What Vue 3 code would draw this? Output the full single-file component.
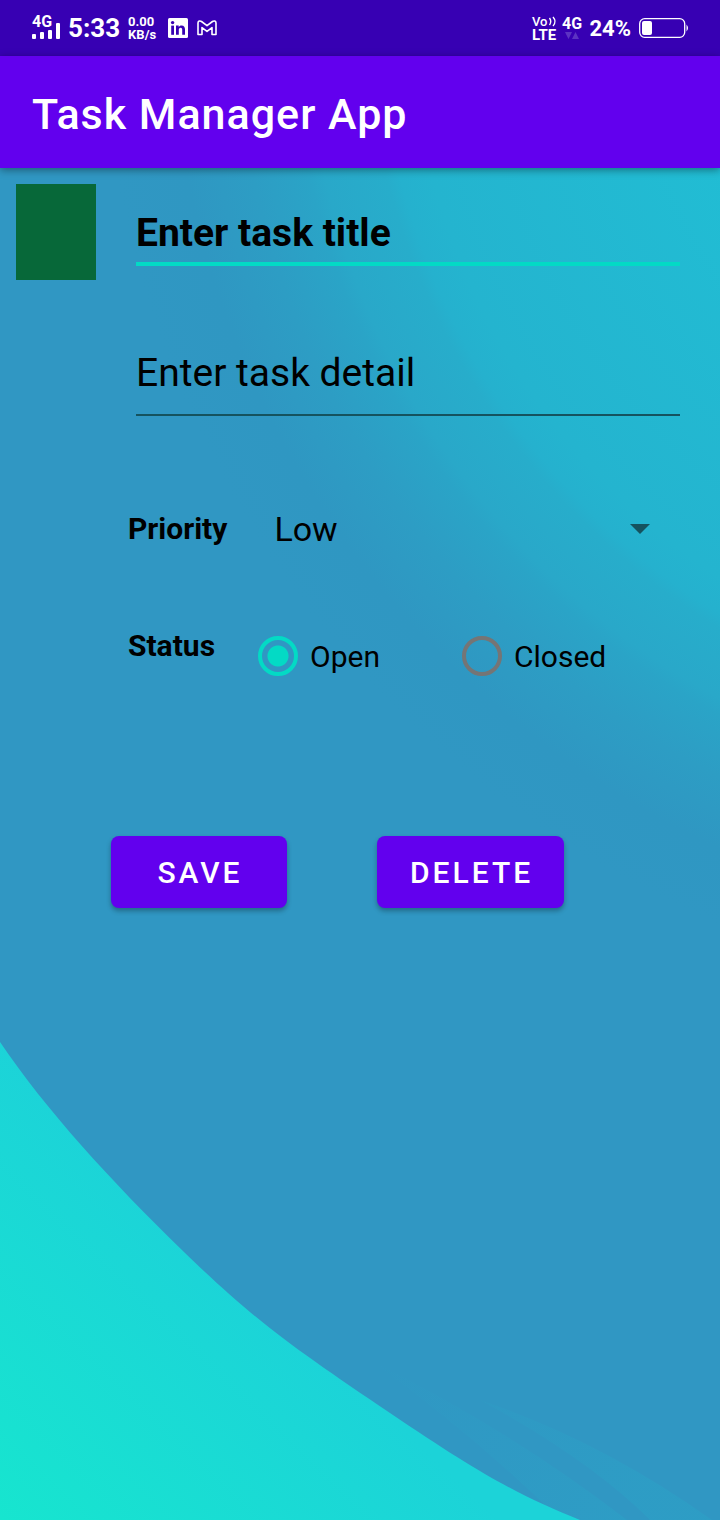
<script setup>
import { ref } from 'vue'

const title = ref('')
const detail = ref('')
const priority = ref('Low')
const status = ref('Open')
const priorities = ['Low', 'Medium', 'High']
const statuses = ['Open', 'Closed']
</script>

<template>
  <div class="screen">
    <div class="status-bar">
      <svg class="signal" width="30" height="40" viewBox="0 -6 30 40" fill="#fff">
        <text x="1" y="13" font-size="16" font-weight="700">4G</text>
        <rect x="1" y="20" width="4" height="5" rx="1" />
        <rect x="9" y="18" width="4" height="7" rx="1" />
        <rect x="17" y="16" width="4" height="9" rx="1" />
        <rect x="25" y="9" width="4" height="16" rx="1" />
      </svg>
      <span class="clock">5:33</span>
      <span class="speed"><b>0.00</b><b>KB/s</b></span>
      <svg class="linkedin" width="20" height="20" viewBox="0 0 20 20">
        <rect width="20" height="20" rx="1.500" fill="#fff" />
        <g fill="#3700b3">
          <circle cx="4.600" cy="4.600" r="1.700" />
          <rect x="3.200" y="7.600" width="2.800" height="9.200" />
          <path d="M8 7.600h2.700v1.300c.5-.9 1.500-1.500 2.800-1.500 2.700 0 3.500 1.700 3.500 4.200v5.200h-2.800v-4.700c0-1.400-.3-2.300-1.600-2.300s-1.800.9-1.800 2.300v4.700H8z" />
        </g>
      </svg>
      <svg class="gmail" width="20" height="16" viewBox="0 0 20 16" fill="none" stroke="#fff" stroke-width="1.600" stroke-linejoin="round">
        <path d="M1 14.500V3c0-2 2-2.600 3.500-1.500L10 5.700l5.500-4.200C17 .4 19 1 19 3v11.500h-4V7.600L10 11.400 5 7.600v6.900z" />
      </svg>
      <span class="spacer"></span>
      <svg class="volte" width="28" height="40" viewBox="0 -6 28 40" fill="#fff">
        <text x="1" y="12" font-size="13" font-weight="500">Vo</text>
        <path d="M18.500 4q2.500 3.500 0 7M22 3q4 4.500 0 9" fill="none" stroke="#fff" stroke-width="1.400" />
        <text x="1" y="26" font-size="15" font-weight="700">LTE</text>
      </svg>
      <svg class="data" width="24" height="40" viewBox="0 -6 24 40" fill="#fff">
        <text x="1" y="15" font-size="16" font-weight="700">4G</text>
        <path d="M4 18h7l-3.500 7zM11 25h7l-3.500-7z" fill="#5c33c2" />
      </svg>
      <span class="percent">24%</span>
      <svg class="battery" width="50" height="20" viewBox="0 0 50 20">
        <rect x="0.700" y="0.700" width="45" height="18.600" rx="5" fill="none" stroke="#fff" stroke-width="1.300" />
        <rect x="3" y="3" width="10" height="14" rx="2" fill="#fff" />
        <path d="M47.500 6.500q3 3.500 0 7z" fill="#fff" />
      </svg>
    </div>

    <header class="app-bar"><h1>Task Manager App</h1></header>

    <main class="content">
      <svg class="backdrop" viewBox="0 168 720 1352" preserveAspectRatio="none" aria-hidden="true">
        <defs>
          <radialGradient id="sky" gradientUnits="userSpaceOnUse" cx="1100" cy="0" r="1000">
            <stop offset="0.4" stop-color="#21bdd4" />
            <stop offset="0.69" stop-color="#24b4cf" />
            <stop offset="0.722" stop-color="#25b1ce" />
            <stop offset="0.735" stop-color="#27adcb" />
            <stop offset="0.795" stop-color="#29a8c9" />
            <stop offset="0.81" stop-color="#2aa4c7" />
            <stop offset="0.865" stop-color="#2d9dc4" />
            <stop offset="0.93" stop-color="#2f97c2" />
            <stop offset="1" stop-color="#3097c3" />
          </radialGradient>
          <linearGradient id="wave" gradientUnits="userSpaceOnUse" x1="240" y1="1270" x2="0" y2="1520">
            <stop offset="0" stop-color="#1cd3d8" />
            <stop offset="1" stop-color="#17e5cf" />
          </linearGradient>
          <linearGradient id="streak" gradientUnits="userSpaceOnUse" x1="380" y1="1350" x2="620" y2="1520">
            <stop offset="0" stop-color="#2aa5c8" stop-opacity="0" />
            <stop offset="1" stop-color="#2aa5c8" stop-opacity="0.4" />
          </linearGradient>
        </defs>
        <rect y="168" width="720" height="1352" fill="url(#sky)" />
        <path d="M370 1360Q480 1440 560 1520H627Q510 1430 370 1360Z" fill="url(#streak)" />
        <path d="M480 1400Q590 1460 650 1520H712Q600 1440 480 1400Z" fill="url(#streak)" />
        <path d="M0 1042C46 1110 110 1180 184 1252S300 1352 390 1413S520 1496 580 1520H0Z" fill="url(#wave)" />
      </svg>

      <form class="form" @submit.prevent>
        <div class="top">
          <div class="swatch"></div>
          <div class="fields">
            <input v-model="title" class="title" type="text" placeholder="Enter task title" aria-label="Task title" />
            <input v-model="detail" class="detail" type="text" placeholder="Enter task detail" aria-label="Task detail" />
          </div>
        </div>

        <div class="row priority">
          <label class="caption" for="priority">Priority</label>
          <div class="spinner">
            <select id="priority" v-model="priority">
              <option v-for="p in priorities" :key="p">{{ p }}</option>
            </select>
            <svg width="20" height="10" viewBox="0 0 20 10"><path d="M0 0h20L10 10z" fill="#15535f" /></svg>
          </div>
        </div>

        <div class="row status" role="radiogroup" aria-labelledby="status-caption">
          <span id="status-caption" class="caption">Status</span>
          <div class="options">
            <label v-for="s in statuses" :key="s" class="option">
              <input v-model="status" type="radio" name="status" :value="s" />
              <span>{{ s }}</span>
            </label>
          </div>
        </div>

        <div class="actions">
          <button type="submit">SAVE</button>
          <button type="button">DELETE</button>
        </div>
      </form>
    </main>
  </div>
</template>

<style>
body {
  margin: 0;
  background: #3097c3;
}
</style>

<style scoped>
.screen {
  display: flex;
  flex-direction: column;
  min-height: 100vh;
  font-family: Roboto, "Liberation Sans", sans-serif;
  color: #000;
}
.status-bar {
  display: flex;
  align-items: center;
  height: 56px;
  padding: 0 31px;
  background: #3700b3;
  color: #fff;
}
.clock {
  margin-left: 7px;
  font-size: 26px;
  font-weight: 700;
  line-height: 28px;
}
.speed {
  display: flex;
  flex-direction: column;
  margin: 0 12px 0 8px;
  font-size: 13px;
  line-height: 13px;
}
.gmail {
  margin-left: 9px;
}
.spacer {
  flex: 1;
}
.data {
  margin: 0 4px 0 2px;
}
.percent {
  margin-right: 8px;
  font-size: 22px;
  font-weight: 700;
}
.app-bar {
  display: flex;
  position: relative;
  z-index: 1;
  box-sizing: border-box;
  align-items: center;
  height: 112px;
  padding: 4px 32px 0;
  background: #6200ee;
  box-shadow: 0 2px 8px rgba(0, 0, 0, 0.4);
}
.app-bar h1 {
  margin: 0;
  color: #fff;
  font-size: 43px;
  font-weight: 500;
  letter-spacing: 1px;
}
.content {
  position: relative;
  flex: 1;
}
.backdrop {
  position: absolute;
  inset: 0;
  width: 100%;
  height: 100%;
}
.form {
  position: relative;
  padding: 16px 40px 32px 16px;
}
.top {
  display: flex;
  gap: 40px;
}
.swatch {
  flex: none;
  width: 80px;
  height: 96px;
  background: #076839;
}
.fields {
  display: flex;
  flex: 1;
  flex-direction: column;
  gap: 70px;
  min-width: 0;
}
.fields input {
  box-sizing: border-box;
  width: 100%;
  height: 82px;
  border: 0;
  outline: 0;
  background: none;
  color: #000;
  font-family: inherit;
  font-size: 39px;
}
.fields input::placeholder {
  color: #000;
  opacity: 1;
}
.fields .title {
  padding: 20px 0 0;
  border-bottom: 4px solid #03dac5;
  font-weight: 700;
}
.fields .detail {
  height: 80px;
  padding: 0 0 4px;
  border-bottom: 2px solid #15535f;
}
.row {
  display: flex;
  margin-left: 112px;
}
.caption {
  font-size: 30px;
  font-weight: 700;
  line-height: 36px;
}
.priority {
  align-items: center;
  margin-top: 89px;
}
.spinner {
  display: flex;
  flex: 1;
  align-items: center;
  margin: 0 30px 0 47px;
}
.spinner select {
  flex: 1;
  height: 48px;
  padding: 0;
  border: 0;
  outline: 0;
  appearance: none;
  background: none;
  color: #000;
  font-family: inherit;
  font-size: 34px;
}
.spinner svg {
  margin-left: -20px;
  pointer-events: none;
}
.status {
  margin-top: 75px;
}
.options {
  display: flex;
  gap: 82px;
  margin: 8px 0 0 43px;
}
.option {
  display: flex;
  align-items: center;
  gap: 12px;
  font-size: 30px;
  line-height: 40px;
}
.option span {
  padding-top: 2px;
  line-height: 38px;
}
.option input {
  box-sizing: border-box;
  width: 40px;
  height: 40px;
  margin: 0;
  border: 4px solid #757575;
  border-radius: 50%;
  appearance: none;
}
.option input:checked {
  border-color: #03dac5;
  background: radial-gradient(circle, #03dac5 10px, transparent 11px);
}
.actions {
  display: flex;
  gap: 90px;
  margin: 160px 0 0 95px;
}
.actions button {
  min-width: 176px;
  height: 72px;
  padding: 0 31px 0 33px;
  border: 0;
  border-radius: 8px;
  background: #6200ee;
  box-shadow: 0 3px 5px rgba(0, 0, 0, 0.3);
  color: #fff;
  font-family: inherit;
  font-size: 30px;
  font-weight: 500;
  letter-spacing: 3px;
}
</style>
